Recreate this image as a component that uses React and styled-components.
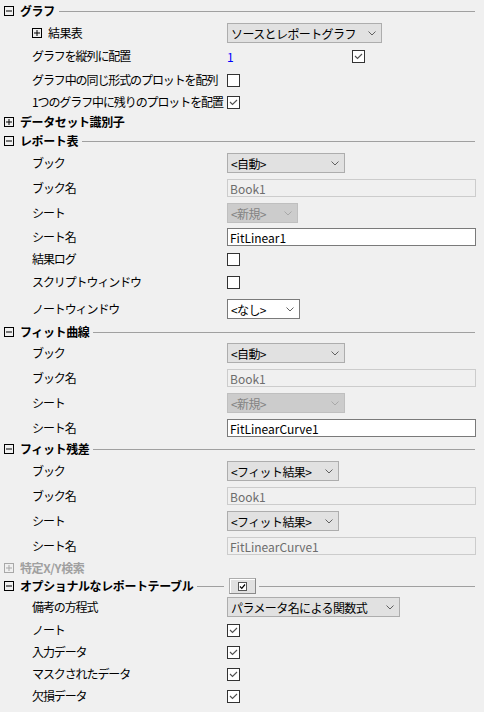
import React from 'react'
import styled, { createGlobalStyle } from "styled-components";

const GlobalStyle = createGlobalStyle`
body {
  margin: 0;
  background-color: #f0f0f0;
  font-family: "Noto Sans CJK JP", "Noto Sans", sans-serif;
}
`;

const Panel = styled.div`
width: 484px;
height: 712px;
overflow: hidden;
background-color: #f0f0f0;
padding-right: 9px;
box-sizing: border-box;
color: #000;
font-size: 12px;
`;

const HeaderRow = styled.div`
display: flex;
align-items: center;
height: ${p => p.h}px;
padding-left: ${p => p.indent || 4}px;
`;

const HeaderSplit = styled.div`
display: grid;
grid-template-columns: 224px 1fr;
align-items: center;
height: ${p => p.h}px;
`;

const HeaderLeft = styled.div`
display: flex;
align-items: center;
padding-left: 4px;
`;

const HeaderRight = styled.div`
display: flex;
align-items: center;
padding-left: 5px;
`;

const Title = styled.span`
font-weight: 700;
font-size: 12px;
letter-spacing: -0.4px;
margin-left: 6px;
white-space: nowrap;
line-height: 1;
color: ${p => p.disabled ? "#a0a0a0" : "#000"};
`;

const SubTitle = styled.span`
font-size: 12px;
letter-spacing: -0.6px;
margin-left: 6px;
line-height: 1;
`;

const Rule = styled.div`
flex: 1;
height: 1px;
background-color: #a0a0a0;
margin-left: ${p => p.gap ?? 4}px;
`;

const Row = styled.div`
display: grid;
grid-template-columns: 227px 1fr;
align-items: center;
height: ${p => p.h}px;
`;

const Label = styled.div`
padding-left: 32px;
font-size: 12px;
letter-spacing: -1.1px;
white-space: nowrap;
line-height: 1;
`;

const Cell = styled.div`
display: flex;
align-items: center;
`;

const SelectBox = styled.div`
display: flex;
align-items: center;
justify-content: space-between;
box-sizing: border-box;
width: ${p => p.w}px;
height: 20px;
padding: 0 5px 0 3px;
font-size: 12px;
letter-spacing: -0.6px;
white-space: nowrap;
border: 1px solid ${p => p.variant === "disabled" ? "#bfbfbf" : p.variant === "white" ? "#7a7a7a" : "#adadad"};
background-color: ${p => p.variant === "disabled" ? "#cccccc" : p.variant === "white" ? "#ffffff" : "#e1e1e1"};
color: ${p => p.variant === "disabled" ? "#838383" : "#000"};
`;

const TextBox = styled.div`
display: flex;
align-items: center;
box-sizing: border-box;
width: 249px;
height: 18px;
padding: 0 2px;
font-size: 12px;
border: 1px solid ${p => p.readOnly ? "#cccccc" : "#7a7a7a"};
background-color: ${p => p.readOnly ? "#f0f0f0" : "#ffffff"};
color: ${p => p.readOnly ? "#6d6d6d" : "#000"};
`;

const Box = styled.div`
box-sizing: border-box;
width: 13px;
height: 13px;
border: 1px solid #333333;
background-color: #ffffff;
display: flex;
align-items: center;
justify-content: center;
`;

const Value = styled.span`
color: #0000ff;
font-size: 12px;
width: 125px;
`;

const ToolButton = styled.div`
box-sizing: border-box;
width: 27px;
height: 16px;
display: flex;
align-items: center;
justify-content: center;
background-color: #e1e1e1;
border: 1px solid #adadad;
border-right-color: #8a8a8a;
border-bottom-color: #8a8a8a;
box-shadow: inset 1px 1px 0 #ffffff;
margin-right: 3px;
`;

const MiniBox = styled.div`
box-sizing: border-box;
width: 9px;
height: 9px;
border: 1px solid #555;
background-color: #fff;
display: flex;
align-items: center;
justify-content: center;
`;

function Toggle({ open, disabled }) {
  const c = disabled ? "#a8a8a8" : "#000";
  return (
    <svg width="10" height="10" viewBox="0 0 10 10">
      <rect x="0.5" y="0.5" width="9" height="9" fill="none" stroke={c} />
      <line x1="2" y1="5" x2="8" y2="5" stroke={c} />
      {!open && <line x1="5" y1="2" x2="5" y2="8" stroke={c} />}
    </svg>
  );
}

function Chevron({ disabled }) {
  return (
    <svg width="8" height="5" viewBox="0 0 8 5">
      <polyline points="0.5,0.5 4,4 7.5,0.5" fill="none" stroke={disabled ? "#a8a8a8" : "#606060"} />
    </svg>
  );
}

function Check({ checked }) {
  return (
    <Box>
      {checked && (
        <svg width="11" height="11" viewBox="0 0 11 11">
          <polyline points="2,5 4.5,7.5 9,3" fill="none" stroke="#505050" strokeWidth="1.1" />
        </svg>
      )}
    </Box>
  );
}

function Select({ w, text, variant }) {
  return (
    <SelectBox w={w} variant={variant}>
      <span>{text}</span>
      <Chevron disabled={variant === "disabled"} />
    </SelectBox>
  );
}

function Section({ h, title, open = true, line = true, disabled }) {
  return (
    <HeaderRow h={h}>
      <Toggle open={open} disabled={disabled} />
      <Title disabled={disabled}>{title}</Title>
      {line && <Rule />}
    </HeaderRow>
  );
}

function Field({ h, label, children }) {
  return (
    <Row h={h}>
      <Label>{label}</Label>
      <Cell>{children}</Cell>
    </Row>
  );
}

export default function App() {
  return (
    <Panel>
      <GlobalStyle />
      <Section h={22} title="グラフ" />
      <Row h={22}>
        <HeaderRow h={22} indent={32}>
          <Toggle />
          <SubTitle>結果表</SubTitle>
        </HeaderRow>
        <Cell><Select w={155} text="ソースとレポートグラフ" /></Cell>
      </Row>
      <Field h={24} label="グラフを縦列に配置">
        <Value>1</Value>
        <Check checked />
      </Field>
      <Field h={24} label="グラフ中の同じ形式のプロットを配列"><Check /></Field>
      <Field h={20} label="1つのグラフ中に残りのプロットを配置"><Check checked /></Field>
      <Section h={20} title="データセット識別子" open={false} line={false} />

      <Section h={18} title="レポート表" />
      <Field h={26} label="ブック"><Select w={118} text="<自動>" /></Field>
      <Field h={24} label="ブック名"><TextBox readOnly>Book1</TextBox></Field>
      <Field h={26} label="シート"><Select w={71} text="<新規>" variant="disabled" /></Field>
      <Field h={22} label="シート名"><TextBox>FitLinear1</TextBox></Field>
      <Field h={22} label="結果ログ"><Check /></Field>
      <Field h={24} label="スクリプトウィンドウ"><Check /></Field>
      <Field h={30} label="ノートウィンドウ"><Select w={73} text="<なし>" variant="white" /></Field>

      <Section h={16} title="フィット曲線" />
      <Field h={26} label="ブック"><Select w={118} text="<自動>" /></Field>
      <Field h={24} label="ブック名"><TextBox readOnly>Book1</TextBox></Field>
      <Field h={26} label="シート"><Select w={118} text="<新規>" variant="disabled" /></Field>
      <Field h={24} label="シート名"><TextBox>FitLinearCurve1</TextBox></Field>

      <Section h={18} title="フィット残差" />
      <Field h={26} label="ブック"><Select w={112} text="<フィット結果>" /></Field>
      <Field h={24} label="ブック名"><TextBox readOnly>Book1</TextBox></Field>
      <Field h={26} label="シート"><Select w={112} text="<フィット結果>" /></Field>
      <Field h={24} label="シート名"><TextBox readOnly>FitLinearCurve1</TextBox></Field>

      <Section h={20} title="特定X/Y検索" open={false} line={false} disabled />
      <HeaderSplit h={16}>
        <HeaderLeft>
          <Toggle open />
          <Title>オプショナルなレポートテーブル</Title>
          <Rule />
        </HeaderLeft>
        <HeaderRight>
          <ToolButton>
            <MiniBox>
              <svg width="7" height="7" viewBox="0 0 7 7">
                <polyline points="1,3.5 2.8,5.3 6,1.5" fill="none" stroke="#000" strokeWidth="1.2" />
              </svg>
            </MiniBox>
          </ToolButton>
          <Rule gap={0} />
        </HeaderRight>
      </HeaderSplit>
      <Field h={26} label="備考の方程式"><Select w={173} text="パラメータ名による関数式" /></Field>
      <Field h={20} label="ノート"><Check checked /></Field>
      <Field h={24} label="入力データ"><Check checked /></Field>
      <Field h={20} label="マスクされたデータ"><Check checked /></Field>
      <Field h={24} label="欠損データ"><Check checked /></Field>
    </Panel>
  );
}
